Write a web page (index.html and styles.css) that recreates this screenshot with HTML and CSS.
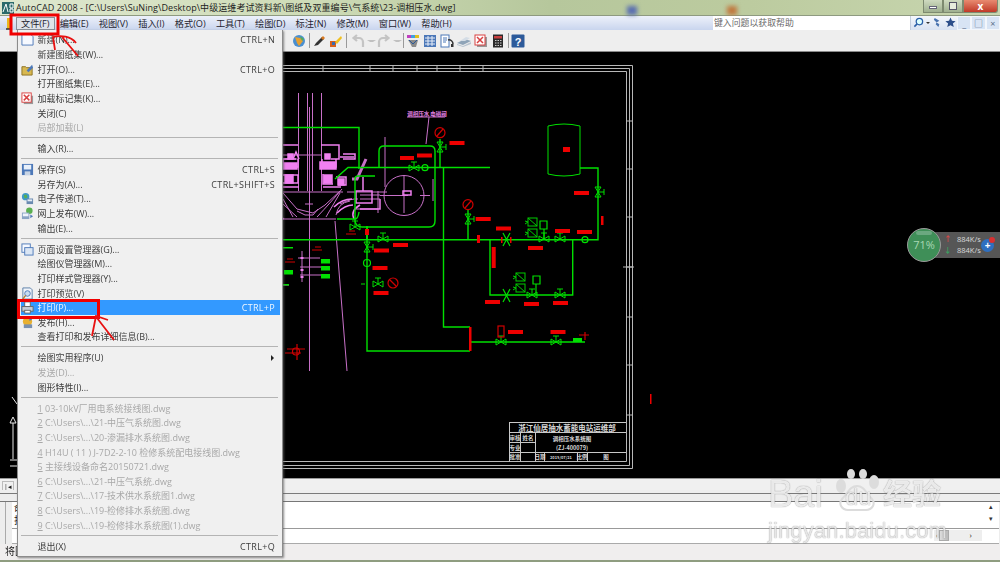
FILE: index.html
```html
<!DOCTYPE html>
<html lang="zh-CN">
<head>
<meta charset="utf-8">
<title>AutoCAD 2008</title>
<link rel="stylesheet" href="styles.css">
</head>
<body>
<div class="app">
  <header class="titlebar">
    <svg class="appicon" viewBox="0 0 12 12"><rect width="12" height="12" fill="#2b6b6b"/><path d="M1 10L4 2l2 8M8 2h3v4H8zM8 7h3v3H8z" fill="none" stroke="#fff" stroke-width="1"/></svg>
    <span class="titletext">AutoCAD 2008 - [C:\Users\SuNing\Desktop\中级运维考试资料新\图纸及双重编号\气系统\23-调相压水.dwg]</span>
    <div class="blot blot-blue"></div>
    <div class="blot blot-orange"></div>
    <div class="winbtns">
      <span class="winbtn"><i class="g-min"></i></span>
      <span class="winbtn"><i class="g-max"></i></span>
      <span class="winbtn close">x</span>
    </div>
  </header>

  <nav class="menubar">
    <svg class="docicon" viewBox="0 0 8 13"><path d="M4 1v11" stroke="#e8b820" stroke-width="4"/><path d="M1 12h6" stroke="#333" stroke-width="1.5"/></svg>
    <span class="mitem on">文件(F)</span>
    <span class="mitem">编辑(E)</span>
    <span class="mitem">视图(V)</span>
    <span class="mitem">插入(I)</span>
    <span class="mitem">格式(O)</span>
    <span class="mitem">工具(T)</span>
    <span class="mitem">绘图(D)</span>
    <span class="mitem">标注(N)</span>
    <span class="mitem">修改(M)</span>
    <span class="mitem">窗口(W)</span>
    <span class="mitem">帮助(H)</span>
    <div class="helpbox">
      <span class="helpinput">键入问题以获取帮助</span>
      <span class="hb first">
        <svg viewBox="0 0 12 12" class="hi"><circle cx="7" cy="5" r="3.5" fill="#dff" stroke="#2a5fa8" stroke-width="1.4"/><path d="M4.5 7.5L1.5 10.5" stroke="#2a5fa8" stroke-width="1.8"/></svg>
        <b class="hdrop"></b>
      </span>
      <span class="hb"><svg viewBox="0 0 12 12" class="hi"><path d="M3 1l5 3-3 2 3 2-1 3-3-3 1-2-3-3z" fill="#4a74b0"/></svg></span>
      <span class="hb"><svg viewBox="0 0 12 12" class="hi"><path d="M6 .5l1.6 3.7 4 .3-3 2.6 1 3.9L6 9l-3.600 2 1-3.900-3-2.600 4-.3z" fill="#2d4f8a"/></svg></span>
      <span class="mdi">_</span><span class="mdi">&#9633;</span><span class="mdi">×</span>
    </div>
  </nav>

  <div class="toolbar">
    <span class="tb"><svg viewBox="0 0 14 14"><circle cx="7" cy="7" r="6" fill="#4a8fd0"/><path d="M3 3l5 1 3 3-4 5-2-3z" fill="#e8a030"/><path d="M8 2l4 3-2 2z" fill="#58b050"/></svg></span>
    <i class="tsep"></i>
    <span class="tb"><svg viewBox="0 0 14 14"><path d="M2 12l2-3 6-6 2 2-6 6z" fill="#333"/><path d="M9 4l2-2 2 2-2 2z" fill="#d87820"/></svg></span>
    <span class="tb"><svg viewBox="0 0 14 14"><rect x="1" y="7" width="6" height="6" fill="#d8601a"/><rect x="3" y="8" width="3" height="3" fill="#3a6ab0"/><path d="M6 8l6-6 1 2-5 6z" fill="#f0c020"/></svg></span>
    <i class="tsep wide"></i>
    <span class="tb"><svg viewBox="0 0 14 14"><path d="M12 13V8a4 4 0 0 0-4-4H3M6 1L2.500 4 6 7" fill="none" stroke="#c4c4c4" stroke-width="2.200"/></svg></span>
    <b class="tdrop"></b>
    <span class="tb"><svg viewBox="0 0 14 14"><path d="M2 13V8a4 4 0 0 1 4-4h5M8 1l3.500 3L8 7" fill="none" stroke="#c4c4c4" stroke-width="2.200"/></svg></span>
    <b class="tdrop"></b>
    <i class="tsep"></i>
    <span class="tb"><svg viewBox="0 0 14 14"><rect x="1" y="1" width="12" height="3" fill="#c040c0"/><rect x="5" y="1" width="4" height="3" fill="#40a0e0"/><rect x="9" y="1" width="4" height="3" fill="#e0c020"/><path d="M2 6h10l-2 7H6L4 9z" fill="#8a8a8a"/><path d="M3 6l4 4 4-4" stroke="#2a5a9a" fill="none"/></svg></span>
    <span class="tb"><svg viewBox="0 0 14 14"><rect x="1" y="1" width="12" height="12" fill="#4c78b8"/><path d="M5 2v10M9 2v10M2 4h10M2 7h10M2 10h10" stroke="#e8eef8"/></svg></span>
    <span class="tb"><svg viewBox="0 0 14 14"><rect x="1" y="1" width="8" height="12" fill="#fff" stroke="#4c78b8"/><path d="M3 4h4M3 6h4M3 8h3" stroke="#4c78b8"/><path d="M8 6a4 4 0 0 1 5 4" fill="none" stroke="#333" stroke-width="1.500"/><rect x="11" y="10" width="2.500" height="3" fill="#333"/></svg></span>
    <span class="tb"><svg viewBox="0 0 14 14"><path d="M0 9l8-4 6 2-8 4z" fill="#8fa4b8"/><path d="M0 10l6 2 8-4v2l-8 3-6-2z" fill="#b8c4d0"/><path d="M3 7l6-4 4 1-5 3z" fill="#d4dde6"/></svg></span>
    <span class="tb"><svg viewBox="0 0 14 14"><rect x="3" y="3" width="10" height="10" fill="#999"/><rect x="1" y="1" width="10" height="10" fill="#fff" stroke="#d84040"/><path d="M3 3l6 6M9 3l-6 6" stroke="#d84040" stroke-width="1.500"/></svg></span>
    <span class="tb"><svg viewBox="0 0 14 14"><rect x="2" y="0.500" width="10" height="13" fill="#2a2a2a"/><rect x="3" y="2" width="8" height="2.500" fill="#c84040"/><path d="M4 6.500h1.500M6.500 6.500h1.500M9 6.500h1.500M4 9h1.500M6.500 9h1.500M9 9h1.500M4 11.500h1.500M6.500 11.500h1.500M9 11.500h1.500" stroke="#ccc"/></svg></span>
    <i class="tsep"></i>
    <span class="tb"><svg viewBox="0 0 14 14"><rect x="0.500" y="0.500" width="13" height="13" rx="1" fill="#2c5a9a"/><text x="7" y="11.500" class="qmark">?</text></svg></span>
  </div>

  <main class="canvas">
    <svg class="drawing" viewBox="0 52 1000 427" width="1000" height="427">
      <defs>
        <g id="vh"><path d="M-5-3V3L5-3V3Z M0 0V-6M-3-6H3" fill="none" stroke="#00dd00" stroke-width="1"/></g>
        <g id="vv"><path d="M-3-5H3L-3 5H3Z M0 0H6M6-3V3" fill="none" stroke="#00dd00" stroke-width="1"/></g>
        <g id="sol"><rect x="-4" y="-4" width="9" height="8" fill="none" stroke="#00cc00"/><path d="M-4-4l9 8M-7-1l3 1-3 2" fill="none" stroke="#00cc00"/></g>
      </defs>
      <!-- frame -->
      <g fill="none" stroke="#b8b8b8" stroke-width="1">
        <path d="M270 66.500H632.500V469.500H270"/>
        <path d="M270 69.500H629.500V466.500H270"/>
        <path d="M270 72.500H626.500V462.500H270"/>
        <path d="M323 66v7M370 66v7M393 66v7M417 66v7M437 66v7M460 66v7M483 66v7M626 122h7M626 170h7M626 218h7M626 268h7M623 268h11M626 318h7M626 366h7M626 416h7"/>
      </g>
      <!-- title block -->
      <g fill="none" stroke="#c8c8c8" stroke-width="1">
        <path d="M509 423.500H626M509 433.500H626M509 443.500H535M509 453.500H626M509.500 423.500V462.500M520.500 433.500V462.500M535.500 433.500V462.500M544.500 453.500V462.500M577.500 453.500V462.500M587.500 453.500V462.500"/>
      </g>
      <g class="tbtext">
        <text x="567" y="431.500" class="tb-big">浙江仙居抽水蓄能电站运维部</text>
        <text x="572" y="441.500">调相压水系统图</text>
        <text x="572" y="451">(ZJ-400079)</text>
        <text x="515" y="441">审核</text><text x="528" y="441">姓名</text>
        <text x="515" y="451">专业</text><text x="515" y="460">批准</text>
        <text x="540" y="460">日期</text><text x="561" y="460" class="tb-sm">2015/07/21</text>
        <text x="582" y="460">比例</text><text x="606" y="460">图</text>
      </g>
      <!-- pink equipment -->
      <g fill="none" stroke="#c870c8" stroke-width="1">
        <path d="M298.500 94V192M307.500 94V192M312.500 94V192M321.500 94V192M309.500 108V372M283 194l14 16 16 4 12-8 15-14M342 190q-10 12-25 28M297 212l8 4h8l5-6M385 138v50M347 193h40M283 193h60M305 205h8M283 200l10 18M340 194l-14 24M283 156h38M283 160h15M283 205l14 13"/>
        <circle cx="404" cy="196.500" r="20"/><path d="M380 196.500h28M404 176v38M420 196.500h10M433 180v22M360 196h20M360 200h20M356 210h22M378 192v22"/>
        <path d="M283 220H336M335 222l12 150M302 252v31M283 286h6M300 268h22M298 259h22M300 276h22M340 205q12-6 18-5M336 216q2-12 14-14"/>
        <path d="M407 118h38M429 118l-3 27"/>
      </g>
      <g fill="none" stroke="#f080f0" stroke-width="1.500">
        <path d="M283 146h15M321 146h18v14h-8M299 160l-3-7-3 7M296 160h-13v8h15v-8M322 160v8h14v-8M340 158h14M343 155h12v5h-12M283 176h15v8h-15M323 175v10h10M336 178h10v8h-8M356 192h16v12h-16zM363 178v14M360 210h20v-10M354 220q-4-8 6-14M276 216l8 4M283 188h16M323 188h18"/>
        <path d="M320 163h16v7h-16zM283 164h14v6h-14zM288 155h5v5h-5zM325 155h5v5h-5zM324 176h8v8h-8zM285 176h8v8h-8zM338 180h6v6h-6z" fill="#f080f0"/>
        <path d="M352 180l5 0 9-20" stroke-width="3" stroke="#c870c8"/>
        <path d="M403 192h8v4h-8zM334 208q8-8 18-8M337 214q8-8 16-8" />
        <path d="M302 258v2M302 270v2M302 277v2" stroke-width="3"/>
      </g>
      <text x="427" y="117" class="pinklabel">调相压水 电磁阀</text>
      <!-- green pipes -->
      <g fill="none" stroke="#00e000" stroke-width="1.400">
        <path d="M283 128.500H359V170M335 180l13-11.500H490M490 168.500"/>
        <path d="M443.500 168.500V328H470M367 227V352H470M283 240.700H598V169H580M490 240.700V296H572.700V240.700M468 210V240.700"/>
        <path d="M379 168v-16q0-5 5-5h46q5 0 5 5v70q0 6-6 6H362q-6 0-7-6V180q0-3 3-3h17"/>
        <path d="M440 140v28M367 227V240M470 343H585"/>
        <path d="M548 127q16-4 32 0v48q-16 4-32 0z" stroke-width="1"/>
        <path d="M337 220h18q3 0 4-7"/>
      </g>
      <use href="#vh" x="414" y="169"/><use href="#vv" x="440" y="148"/><use href="#vh" x="383" y="240"/><use href="#vv" x="367" y="248"/><use href="#vh" x="378" y="285"/><use href="#vv" x="468" y="220"/><use href="#vv" x="598" y="193"/><use href="#vh" x="560" y="240"/><use href="#vh" x="544" y="240"/><use href="#vh" x="532" y="296"/><use href="#vh" x="560" y="296"/><use href="#vh" x="501" y="343"/><use href="#vh" x="556" y="343"/><use href="#vh" x="355" y="228"/>
      <g fill="none" stroke="#00e000" stroke-width="1.200">
        <circle cx="425" cy="168.700" r="3"/><circle cx="367" cy="264" r="3.500"/><circle cx="585" cy="240.700" r="3"/>
        <path d="M540 222h7v8h-7zM544 230v10M533 277h7v8h-7zM536 285v11M365 285h-4"/>
        <path d="M503 234l7 13M510 234l-7 13M503 290l7 13M510 290l-7 13"/>
      </g>
      <use href="#sol" x="532" y="223"/><use href="#sol" x="532" y="234"/><use href="#sol" x="520" y="278"/><use href="#sol" x="520" y="289"/>
      <g fill="#00e000">
        <rect x="321" y="260" width="9" height="4.500"/><rect x="321" y="267" width="9" height="4.500"/><rect x="321" y="275" width="9" height="4.500"/><rect x="284" y="271" width="9" height="4.500"/><rect x="573" y="339" width="9" height="4"/>
        <rect x="283" y="248" width="10" height="1.500"/><rect x="283" y="285" width="6" height="1.500"/>
      </g>
      <!-- red -->
      <g fill="#ee0000">
        <rect x="400" y="157" width="14" height="4"/><rect x="417" y="154.500" width="15" height="4"/><rect x="449.500" y="142" width="15" height="4"/><rect x="475.700" y="218" width="15" height="4"/><rect x="393" y="244" width="15" height="4"/><rect x="374" y="249.500" width="15" height="4"/><rect x="372.500" y="267" width="15" height="4"/><rect x="373.500" y="292" width="15" height="4"/><rect x="496" y="227.500" width="15" height="4"/><rect x="574" y="192" width="15" height="4"/><rect x="555" y="230" width="15" height="4"/><rect x="577" y="231" width="15" height="4"/><rect x="528" y="247" width="15" height="4"/><rect x="485" y="301" width="15" height="4"/><rect x="524" y="303" width="15" height="4"/><rect x="553" y="302" width="15" height="4"/><rect x="508" y="331" width="15" height="4"/><rect x="550.500" y="331" width="15" height="4"/>
        <rect x="491.700" y="248" width="4" height="21"/><rect x="563" y="148" width="7" height="5"/><rect x="477" y="236" width="3" height="8"/><rect x="365" y="230" width="4" height="6"/><rect x="501" y="238" width="1.500" height="6"/><rect x="510" y="238" width="1.500" height="6"/><rect x="469" y="328" width="2.500" height="24"/>
        <rect x="601" y="217" width="2.500" height="9"/><rect x="650" y="395" width="1.500" height="10"/>
      </g>
      <g fill="none" stroke="#d00000" stroke-width="1.200">
        <circle cx="440" cy="133.700" r="5"/><path d="M437 137l6-7"/><circle cx="468" cy="205.600" r="5"/><path d="M465 209l6-7"/>
        <circle cx="393" cy="284" r="5"/><path d="M390 281l6 6"/><rect x="498" y="327" width="6" height="11"/><path d="M579 336h10M585 333v8M287 350h18M297 345v16M285 354h16"/><circle cx="296" cy="352.500" r="3.500"/>
        <path d="M346 235h10M349 232h6M312 251h10M315 248h6M285 263h10M287 260h6"/>
      </g>
      <!-- left of menu -->
      <g fill="none" stroke="#e8e8e8"><path d="M12 398l5 7M13 418l-3 6h6zM13 424v36M10 461h8v6h-8"/></g>
    </svg>
  </main>

  <div class="tabsrow"><span class="navbtn">|◂</span></div>
  <div class="strip"></div>
  <div class="cmdwrap">
    <div class="grip"></div>
    <div class="cmdarea">
      <div class="cmdhistory"><p>命</p><p>指</p><span class="vscroll">▴<br><br>▾</span></div>
      <div class="cmdinput"><span class="hscroll">‹<i class="thumb"></i>›</span></div>
    </div>
  </div>
  <footer class="status">将图形打印到绘图仪、打印机或文件：PLOT</footer>
  <div class="taskedge"></div>

  <!-- open File menu -->
  <div class="menu">
    <div class="row"><span class="ic"><svg viewBox="0 0 14 14"><path d="M1 1h9l3 3v9H1z" fill="#f6f9ff" stroke="#4c78b8"/></svg></span><span class="lb">新建(N)...</span><span class="sc">CTRL+N</span></div>
    <div class="row"><span class="ic"></span><span class="lb">新建图纸集(W)...</span></div>
    <div class="row"><span class="ic"><svg viewBox="0 0 14 14"><path d="M1 4h4l1 1h6v8H1z" fill="#d8b850" stroke="#8a7020"/><path d="M6 8l6-6 1 3-5 5z" fill="#4c78b8"/></svg></span><span class="lb">打开(O)...</span><span class="sc">CTRL+O</span></div>
    <div class="row"><span class="ic"></span><span class="lb">打开图纸集(E)...</span></div>
    <div class="row"><span class="ic"><svg viewBox="0 0 14 14"><rect x="3" y="4" width="10" height="9" fill="#999"/><rect x="1" y="1" width="10" height="10" fill="#fff" stroke="#d84040"/><path d="M3 3l6 6M9 3l-6 6" stroke="#d84040" stroke-width="1.600"/></svg></span><span class="lb">加载标记集(K)...</span></div>
    <div class="row"><span class="ic"></span><span class="lb">关闭(C)</span></div>
    <div class="row off"><span class="ic"></span><span class="lb">局部加载(L)</span></div>
    <div class="sep"></div>
    <div class="row"><span class="ic"></span><span class="lb">输入(R)...</span></div>
    <div class="sep"></div>
    <div class="row"><span class="ic"><svg viewBox="0 0 14 14"><rect x="1" y="1" width="12" height="12" fill="#4c78b8"/><rect x="3" y="2" width="8" height="5" fill="#e8f0fa"/><rect x="4" y="9" width="6" height="4" fill="#c8d4e4"/></svg></span><span class="lb">保存(S)</span><span class="sc">CTRL+S</span></div>
    <div class="row"><span class="ic"></span><span class="lb">另存为(A)...</span><span class="sc">CTRL+SHIFT+S</span></div>
    <div class="row"><span class="ic"><svg viewBox="0 0 14 14"><circle cx="5" cy="5" r="4" fill="#3f9ac8"/><path d="M3 3l3 0 1 3-3 1z" fill="#5ab050"/><rect x="6" y="7" width="7" height="6" fill="#6a8ab0"/><rect x="7" y="8" width="5" height="2" fill="#e4ecf6"/></svg></span><span class="lb">电子传递(T)...</span></div>
    <div class="row"><span class="ic"><svg viewBox="0 0 14 14"><circle cx="9" cy="4" r="3.500" fill="#5ab050"/><rect x="1" y="6" width="8" height="7" fill="#8aa4c4"/><rect x="2" y="7" width="6" height="3" fill="#eef3fa"/><path d="M10 8l3 2-3 2z" fill="#4c78b8"/></svg></span><span class="lb">网上发布(W)...</span></div>
    <div class="row"><span class="ic"></span><span class="lb">输出(E)...</span></div>
    <div class="sep"></div>
    <div class="row"><span class="ic"><svg viewBox="0 0 14 14"><rect x="1" y="1" width="9" height="9" fill="#f6f9ff" stroke="#4c78b8"/><rect x="4" y="5" width="9" height="8" fill="#dbe6f4" stroke="#4c78b8"/></svg></span><span class="lb">页面设置管理器(G)...</span></div>
    <div class="row"><span class="ic"></span><span class="lb">绘图仪管理器(M)...</span></div>
    <div class="row"><span class="ic"></span><span class="lb">打印样式管理器(Y)...</span></div>
    <div class="row"><span class="ic"><svg viewBox="0 0 14 14"><path d="M2 1h8l2 2v10H2z" fill="#f0f4fa" stroke="#5a7ea8"/><circle cx="7" cy="7" r="3" fill="#c8dcf0" stroke="#4c78b8"/><path d="M5 9l-3 4" stroke="#b08030" stroke-width="1.500"/></svg></span><span class="lb">打印预览(V)</span></div>
    <div class="row sel"><span class="ic"><svg viewBox="0 0 14 14"><rect x="4" y="1" width="6" height="5" fill="#fff" stroke="#666"/><rect x="1" y="6" width="12" height="5" fill="#c4ccd6" stroke="#666"/><rect x="4" y="10" width="6" height="3" fill="#fff" stroke="#666"/></svg></span><span class="lb">打印(P)...</span><span class="sc">CTRL+P</span></div>
    <div class="row"><span class="ic"><svg viewBox="0 0 14 14"><circle cx="7" cy="6" r="5" fill="#e8b030"/><path d="M3 9h9v4H3z" fill="#7890b0"/><path d="M9 1l3 3-3 1z" fill="#4c78b8"/></svg></span><span class="lb">发布(H)...</span></div>
    <div class="row"><span class="ic"></span><span class="lb">查看打印和发布详细信息(B)...</span></div>
    <div class="sep"></div>
    <div class="row"><span class="ic"></span><span class="lb">绘图实用程序(U)</span><b class="sub"></b></div>
    <div class="row off"><span class="ic"></span><span class="lb">发送(D)...</span></div>
    <div class="row"><span class="ic"></span><span class="lb">图形特性(I)...</span></div>
    <div class="sep"></div>
    <div class="row off"><span class="ic"></span><span class="lb"><u>1</u> 03-10kV厂用电系统接线图.dwg</span></div>
    <div class="row off"><span class="ic"></span><span class="lb"><u>2</u> C:\Users\...\21-中压气系统图.dwg</span></div>
    <div class="row off"><span class="ic"></span><span class="lb"><u>3</u> C:\Users\...\20-渗漏排水系统图.dwg</span></div>
    <div class="row off"><span class="ic"></span><span class="lb"><u>4</u> H14U ( 11 ) J-7D2-2-10 检修系统配电接线图.dwg</span></div>
    <div class="row off"><span class="ic"></span><span class="lb"><u>5</u> 主接线设备命名20150721.dwg</span></div>
    <div class="row off"><span class="ic"></span><span class="lb"><u>6</u> C:\Users\...\21-中压气系统.dwg</span></div>
    <div class="row off"><span class="ic"></span><span class="lb"><u>7</u> C:\Users\...\17-技术供水系统图1.dwg</span></div>
    <div class="row off"><span class="ic"></span><span class="lb"><u>8</u> C:\Users\...\19-检修排水系统图.dwg</span></div>
    <div class="row off"><span class="ic"></span><span class="lb"><u>9</u> C:\Users\...\19-检修排水系统图(1).dwg</span></div>
    <div class="sep"></div>
    <div class="row"><span class="ic"></span><span class="lb">退出(X)</span><span class="sc">CTRL+Q</span></div>
  </div>

  <!-- network widget -->
  <div class="widget">
    <div class="gauge"><i class="gaugetop"></i>71%</div>
    <div class="speeds"><span><b class="up">↑</b>884K/s</span><span><b class="down">↓</b>884K/s</span></div>
    <div class="plus">+<i class="dot"></i></div>
  </div>

  <!-- watermark -->
  <div class="mark">
    <svg class="paw" viewBox="0 0 46 42" width="46" height="42"><g fill="#dcdcdc"><ellipse cx="7" cy="17" rx="5" ry="7"/><ellipse cx="17" cy="5" rx="4" ry="5"/><ellipse cx="29" cy="5" rx="4" ry="5"/><ellipse cx="40" cy="13" rx="5" ry="7"/></g><path d="M23 17c7 0 9 7 15 13 4 5 0 11-6 11H14c-6 0-10-6-6-11 6-6 8-13 15-13z" fill="none" stroke="#dcdcdc" stroke-width="2"/></svg>
    <div class="markline"><span>Bai</span><span class="du">du</span><span class="jy">经验</span></div>
    <div class="markurl">jingyan.baidu.com</div>
  </div>

  <!-- hand-drawn red annotations -->
  <svg class="ink" viewBox="0 0 1000 562" width="1000" height="562">
    <g fill="none" stroke="#f00000" stroke-width="3">
      <rect x="11" y="15" width="47" height="19"/>
      <rect x="18.500" y="300.500" width="80" height="17"/>
    </g>
    <g fill="none" stroke="#e81010" stroke-width="1.800">
      <path d="M55 50l-2-13c8-2 18-1 23 6M62 37l16 19"/>
      <path d="M92 336l4-20 12 4M97 318l17 22"/>
    </g>
  </svg>
</div>
</body>
</html>
```

FILE: styles.css
```css
* { box-sizing: border-box; }
html, body { margin: 0; padding: 0; background: #000; }
body { width: 1000px; height: 562px; overflow: hidden; font-family: "Open Sans", "Noto Sans CJK SC", sans-serif; font-size: 9px; color: #222; }

.app { position: relative; width: 1000px; height: 562px; display: flex; flex-direction: column; overflow: hidden; filter: blur(0.4px); }

/* title bar */
.titlebar { height: 15px; flex: none; display: flex; align-items: center; padding-left: 2px; gap: 2px; position: relative; background: linear-gradient(90deg, #dfe8cf 0%, #cfdcb8 30%, #b6c79c 55%, #bccb9f 75%, #c8d6b0 100%); }
.appicon { width: 12px; height: 12px; flex: none; }
.titletext { font-size: 9px; color: #1c1c1c; white-space: nowrap; letter-spacing: .08px; }
.blot { position: absolute; top: 6px; height: 9px; filter: blur(2px); }
.blot-blue { left: 627px; width: 10px; background: #5a6fb0; }
.blot-orange { left: 727px; width: 10px; background: #c07a40; }
.winbtns { margin-left: auto; margin-right: 2px; display: flex; height: 13px; align-self: flex-start; }
.winbtn { width: 20px; display: flex; align-items: center; justify-content: center; background: linear-gradient(#cfdac0, #9fb090); border: 1px solid #7d8a70; border-top: 0; }
.winbtn.close { width: 35px; background: linear-gradient(#e88a70, #c03a28); color: #fff; font-weight: 700; font-size: 10px; border-radius: 0 0 3px 0; }
.g-min { width: 8px; height: 3px; background: #fff; border: 1px solid #667; margin-top: 3px; }
.g-max { width: 8px; height: 8px; border: 1.500px solid #556; background: #e6ecdc; }

/* menu bar */
.menubar { height: 15px; flex: none; display: flex; align-items: center; background: linear-gradient(#edf1fa, #c9d5ee); border-top: 1px solid #8e9a80; font-size: 9.200px; }
.docicon { width: 8px; height: 13px; margin: 0 3px 0 5px; flex: none; }
.mitem { padding: 0 5.100px; white-space: nowrap; color: #1f2430; line-height: 13px; }
.mitem.on { background: #dfe3ea; outline: 1px solid #8a8f98; outline-offset: -1px; padding: 0 5px; }
.helpbox { position: absolute; left: 713px; top: 15px; width: 287px; height: 15px; display: flex; align-items: center; }
.helpinput { width: 197px; height: 14px; line-height: 14px; background: #fff; color: #6a6a6a; padding-left: 1px; font-size: 8.900px; }
.hb { width: 13px; height: 14px; display: flex; align-items: center; justify-content: center; gap: 2px; background: linear-gradient(#f4f7fc, #d8e2f2); }
.hb.first { width: 21px; border-left: 1px solid #c3cede; }
.hi { width: 11px; height: 11px; }
.hdrop { width: 0; height: 0; border: 2px solid transparent; border-top-color: #333; margin-top: 2px; }
.mdi { width: 14.300px; height: 14px; text-align: center; line-height: 13px; font-size: 9px; color: #5a6f8a; background: #d8e4f4; border: 1px solid #f2f6fb; }

/* toolbar */
.toolbar { height: 22px; flex: none; display: flex; align-items: center; padding-left: 290.500px; background: #eeeeee; border-bottom: 1px solid #8a8a8a; }
.tb { width: 17px; height: 18px; display: flex; align-items: center; justify-content: center; flex: none; }
.tb svg { width: 14px; height: 14px; }
.tsep { width: 1px; height: 15px; background: #9a9a9a; margin: 0 1px; flex: none; }
.tsep.wide { margin: 0 3px 0 1px; }
.tdrop { width: 9px; height: 0; flex: none; border-top: 2px solid #c0c0c0; border-left: 3px solid transparent; border-right: 3px solid transparent; }
.qmark { fill: #fff; font: 700 11px "Liberation Sans", sans-serif; text-anchor: middle; }

/* drawing */
.canvas { height: 426px; flex: none; background: #000; overflow: hidden; }
.drawing { display: block; margin-top: -1px; }
.tbtext text { fill: #d8d8d8; font: 700 5.500px "Noto Sans CJK SC", sans-serif; text-anchor: middle; }
.tbtext .tb-big { font-size: 7.500px; }
.tbtext .tb-sm { font-size: 4px; }
.pinklabel { fill: #e080e0; font: 700 5.500px "Noto Sans CJK SC", sans-serif; text-anchor: middle; }

/* bottom strips */
.tabsrow { height: 12px; flex: none; background: #f0f0f0; padding-left: 2px; border-top: 1px solid #999; }
.navbtn { font-size: 7px; line-height: 10px; display: inline-block; border: 1px solid #bbb; padding: 0 1px; height: 11px; }
.strip { height: 4px; flex: none; background: #eeeeee; border-bottom: 1px solid #7a7a7a; }
.cmdwrap { height: 50px; flex: none; display: flex; background: #ededed; padding-top: 8px; position: relative; }
.cmdwrap::before { content: ""; position: absolute; left: 0; right: 0; top: 7px; height: 1px; background: #777; }
.grip { width: 12px; flex: none; border-left: 1px solid #aaa; margin-left: 5px; }
.cmdarea { flex: 1; display: flex; flex-direction: column; margin-right: 1px; margin-left: -5px; border-bottom: 1px solid #aaa; }
.cmdhistory { height: 27px; background: #fff; border-bottom: 1px solid #999; padding-left: 2px; position: relative; }
.cmdhistory p { margin: 0; font-size: 10px; line-height: 12px; }
.vscroll { position: absolute; right: 6px; top: 2px; font-size: 7px; line-height: 6px; color: #333; }
.cmdinput { flex: 1; background: #fff; position: relative; }
.hscroll { position: absolute; left: 922px; top: 1px; width: 48px; height: 11px; background: #eee; font-size: 8px; line-height: 10px; display: flex; justify-content: space-between; padding: 0 10px 0 2px; }
.thumb { width: 10px; height: 11px; background: linear-gradient(90deg, #ddd, #bbb); border: 1px solid #aaa; margin-left: 1px; margin-right: auto; }
.status { height: 16px; flex: none; background: #f0eeee; padding-left: 5px; font-size: 10px; line-height: 14px; white-space: nowrap; }
.taskedge { height: 2px; flex: none; background: #8f9d80; }

/* file menu */
.menu { position: absolute; left: 17px; top: 30px; width: 266px; height: 527px; padding: 2.600px 2px 0 3px; background: #f0f0f0; border: 1px solid #8c8c8c; border-top: 0; box-shadow: 1px 1px 2px rgba(90,90,90,.7); z-index: 2; }
.row { height: 14.640px; display: flex; align-items: center; white-space: nowrap; color: #3c3c3c; }
.row .ic { width: 13px; height: 13px; margin-right: 3.500px; flex: none; }
.ic svg { display: block; width: 13px; height: 13px; }
.row .lb { flex: 1; }
.row .sc { margin-right: 5px; letter-spacing: .32px; color: #3c3c3c; }
.row.off { color: #a8a8a8; }
.row.sel { background: #3399ff; color: #eef6ff; }
.row.sel .sc { color: #eef6ff; }
.sep { height: 6.400px; position: relative; }
.sep::after { content: ""; position: absolute; left: 0; right: 2px; top: 2px; height: 1px; background: #b4b4b4; }
.sub { width: 0; height: 0; border-left: 3px solid #222; border-top: 3px solid transparent; border-bottom: 3px solid transparent; margin-right: 6px; }

/* widget */
.widget { position: absolute; left: 907px; top: 228px; width: 93px; height: 34px; z-index: 1; }
.widget::before { content: ""; position: absolute; left: 16px; top: 4px; width: 77px; height: 26px; border-radius: 13px 0 0 13px; background: #565656; }
.gauge { position: absolute; left: 0; top: 0; width: 34px; height: 34px; border-radius: 50%; background: #3f8f58; border: 1.500px solid #999; color: #a9d8b4; font-size: 11px; line-height: 32px; text-align: center; overflow: hidden; }
.gaugetop { position: absolute; left: 8px; top: 2px; width: 16px; height: 4px; border-radius: 3px; background: #6ba880; }
.speeds { position: absolute; left: 37px; top: 7px; display: flex; flex-direction: column; gap: 1px; color: #d8d8d8; font-size: 7.500px; line-height: 9.500px; }
.speeds b { display: inline-block; width: 12px; margin-right: 1px; }
.up { color: #d04848; }
.down { color: #3aa060; }
.plus { position: absolute; left: 74px; top: 11px; width: 13px; height: 13px; border-radius: 50%; background: #2f6fc0; color: #fff; font-weight: 700; font-size: 10px; text-align: center; line-height: 12px; }
.dot { position: absolute; left: 8px; top: -2px; width: 6px; height: 6px; border-radius: 50%; background: #d83030; }

/* watermark */
.mark { position: absolute; left: 768px; top: 472px; width: 190px; color: rgba(255,255,255,.85); z-index: 1; font-family: "Liberation Sans", "Noto Sans CJK SC", sans-serif; text-shadow: 0 0 1px rgba(0,0,0,.55); }
.paw { position: absolute; left: 66px; top: -3px; }
.markline { display: flex; align-items: flex-end; height: 40px; font-size: 38px; line-height: 36px; position: relative; }
.du { font-size: 24px; margin-left: 22px; line-height: 30px; width: 38px; }
.jy { font-size: 29px; line-height: 34px; font-weight: 700; }
.markurl { font-size: 22px; line-height: 26px; margin-top: 6px; color: rgba(255,255,255,.8); letter-spacing: .1px; }

/* hand-drawn ink */
.ink { position: absolute; left: 0; top: 0; z-index: 3; pointer-events: none; }
```
